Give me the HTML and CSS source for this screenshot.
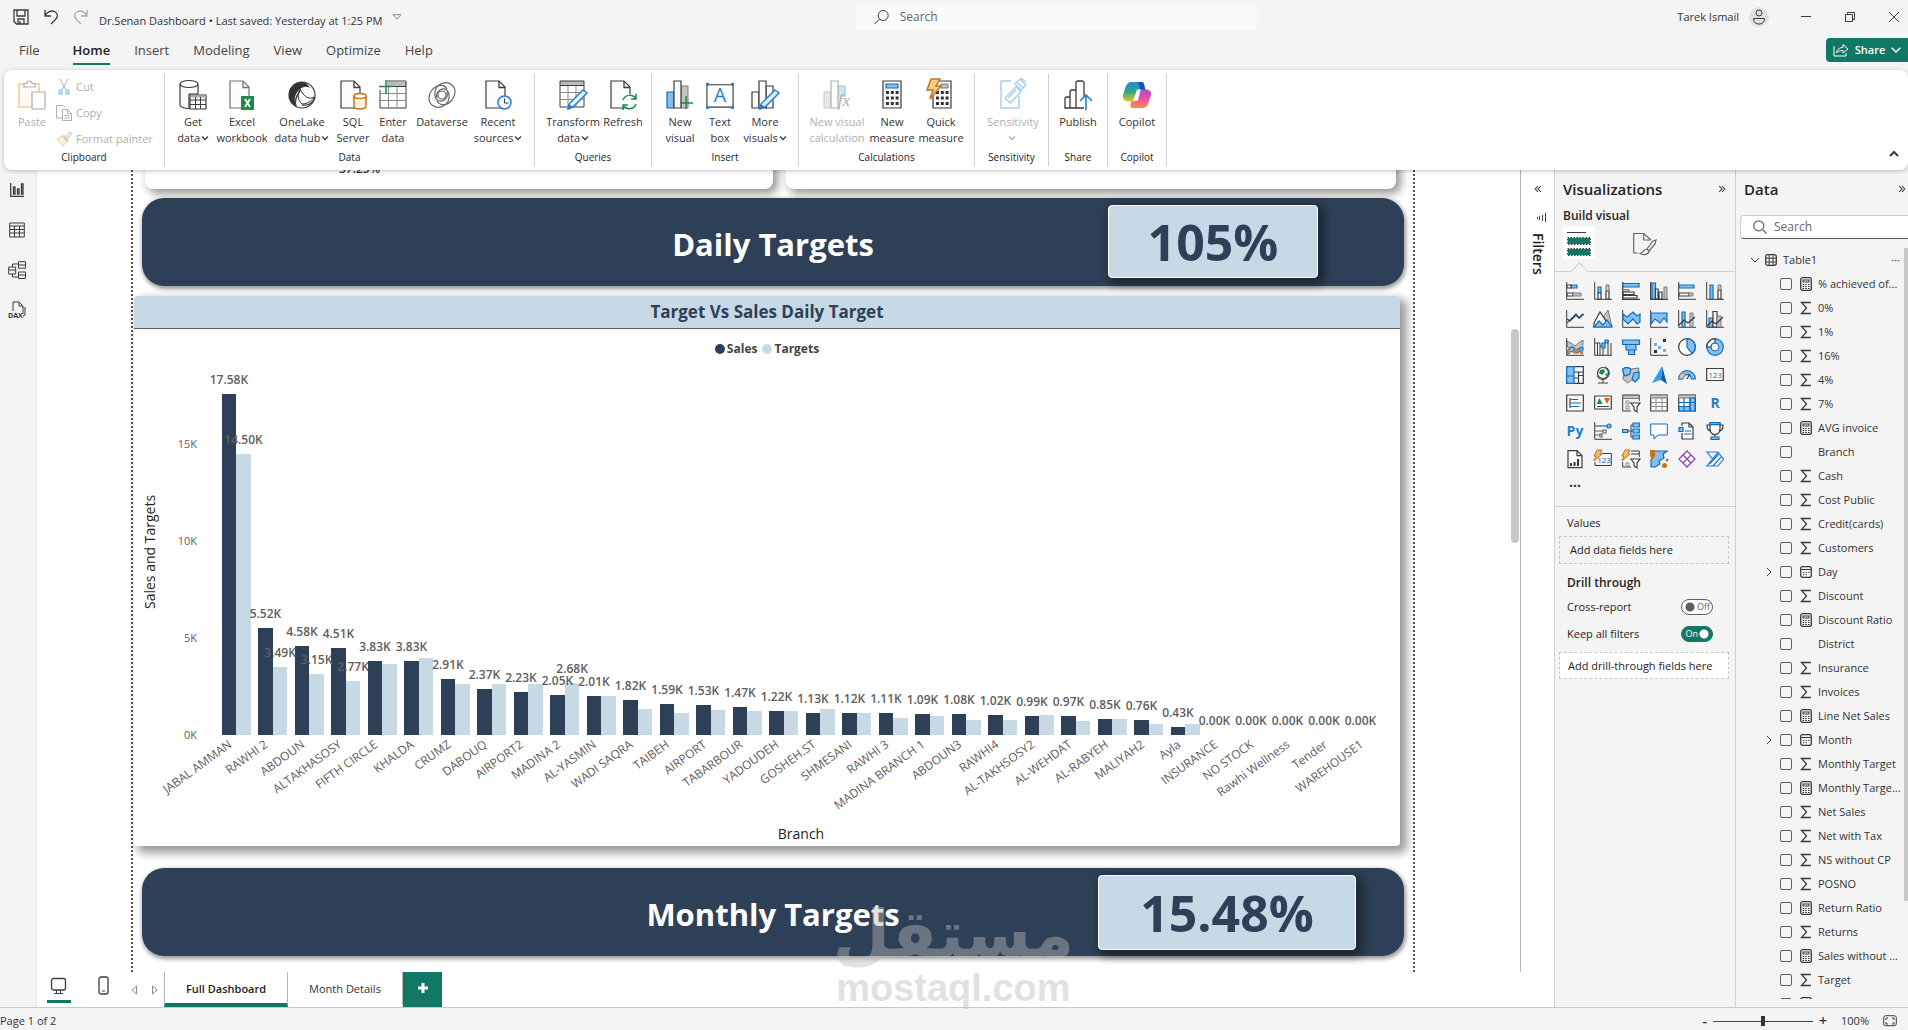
FILE: index.html
```html
<!DOCTYPE html>
<html lang="en">
<head>
    <meta charset="UTF-8">
    <meta name="viewport" content="width=device-width, initial-scale=1.0">
    <title>Dr.Senan Dashboard</title>
    <link rel="stylesheet" href="styles.css">
</head>
<body>

<!-- shared icons -->
<svg class="symbols" aria-hidden="true">
    <symbol id="i-sum" viewBox="0 0 12 14"><path d="M11 1.500H1.500L6.500 7L1.500 12.500H11" class="k w2"/></symbol>
    <symbol id="i-calc" viewBox="0 0 12 14"><rect x=".7" y=".7" width="10.600" height="12.600" rx="2" class="k w2"/><rect x="3" y="3" width="6" height="2" class="k"/><path d="M2.600 7.500h7M2.600 9.500h7M2.600 11.500h7" class="k" stroke-dasharray="1.500 1.200"/></symbol>
    <symbol id="i-date" viewBox="0 0 12 14"><rect x=".7" y="1.700" width="10.600" height="10.600" rx="2" class="k w2"/><path d="M.7 4.500h10.600" class="k"/><path d="M3 7.500h6.500M3 9.700h4" class="k" stroke-dasharray="1.300 1.300"/></symbol>
    <symbol id="i-down" viewBox="0 0 8 8"><path d="M1 2.500L4 5.500L7 2.500" class="k w2"/></symbol>
    <symbol id="i-right" viewBox="0 0 8 10"><path d="M2 1L6 5L2 9" class="k"/></symbol>
    <symbol id="i-dbl" viewBox="0 0 10 10"><path d="M1.500 1.500L5 5L1.500 8.500M5 1.500L8.500 5L5 8.500" class="k w2"/></symbol>
    <symbol id="i-file" viewBox="0 0 28 30"><path d="M2 1h13l6 6v21H2z" class="p"/><path d="M15 1v6.500h6" class="k w2"/></symbol>
</svg>

<header class="titlebar">
    <button class="plain" aria-label="Save"><svg width="16" height="16" viewBox="0 0 16 16"><path d="M1 1h14v14H3.500L1 12.500zM4 1v6h8V1M5 15v-5h6v5M7 12v3" class="k w2"/></svg></button>
    <button class="plain" aria-label="Undo"><svg width="16" height="16" viewBox="0 0 16 16"><path d="M2 1v6h6M2 7C4 3 8 1 11.500 2.500C15.500 4.500 15 8 12.500 10.500L8 15" class="k w2"/></svg></button>
    <button class="plain faded" aria-label="Redo"><svg width="16" height="16" viewBox="0 0 16 16"><path d="M14 1v6H8M14 7C12 3 8 1 4.500 2.500C.5 4.500 1 8 3.500 10.500L8 15" class="k w2"/></svg></button>
    <span class="file-name">Dr.Senan Dashboard • Last saved: Yesterday at 1:25 PM</span>
    <button class="plain" aria-label="File menu"><svg width="10" height="6" viewBox="0 0 10 6"><path d="M1 .7h8L5 5z" class="g"/></svg></button>
    <label class="top-search">
        <svg width="16" height="16" viewBox="0 0 16 16"><circle cx="9.500" cy="6.500" r="5" class="k"/><path d="M6 10L1 15" class="k"/></svg>
        <input type="search" placeholder="Search" aria-label="Search">
    </label>
    <span class="user">Tarek Ismail</span>
    <svg class="avatar" width="20" height="20" viewBox="0 0 20 20"><circle cx="10" cy="10" r="10" fill="#e1e1e1"/><circle cx="10" cy="6" r="3" class="k"/><path d="M4.500 11.500h11c0 4-2.500 5.500-5.500 5.500s-5.500-1.500-5.500-5.500z" class="k"/></svg>
    <button class="plain win" aria-label="Minimize"><svg width="10" height="10" viewBox="0 0 10 10"><path d="M0 4.500h10" class="k"/></svg></button>
    <button class="plain win" aria-label="Restore"><svg width="10" height="10" viewBox="0 0 10 10"><path d="M.5 2.500h7v7h-7zM2.500 2.500v-2h7v7h-2" class="k"/></svg></button>
    <button class="plain win" aria-label="Close"><svg width="10" height="10" viewBox="0 0 10 10"><path d="M0 0l10 10M10 0L0 10" class="k"/></svg></button>
</header>

<nav class="menu">
    <a href="#">File</a>
    <a href="#" class="active">Home</a>
    <a href="#">Insert</a>
    <a href="#">Modeling</a>
    <a href="#">View</a>
    <a href="#">Optimize</a>
    <a href="#">Help</a>
    <button class="share">
        <svg width="16" height="14" viewBox="0 0 16 14"><path d="M1 3v10h12v-3M3.500 10C4 6 7 4.500 10 4.500V1.500L15 6l-5 4V7.500C7 7.500 5 8 3.500 10z" fill="none" stroke="#fff"/></svg>
        Share
        <svg width="10" height="6" viewBox="0 0 10 6"><path d="M.7.7L5 5L9.300.7" fill="none" stroke="#fff" stroke-width="1.400"/></svg>
    </button>
</nav>

<section class="ribbon">
    <div class="group clipboard">
        <div class="tools">
            <button class="tool faded"><svg viewBox="0 0 28 30"><path d="M1 4h20v23H1z" fill="#fff7e6" stroke="#e8a33d" stroke-width="2"/><path d="M6 7V3.500h3a2.500 2.500 0 0 1 5 0h3V7z" class="p"/><path d="M14 12h13v17H14z" class="p"/></svg>Paste</button>
            <div class="small-tools">
                <button class="faded"><svg width="14" height="16" viewBox="0 0 14 16"><path d="M3 0l6 11M11 0L5 11" class="k"/><rect x="2" y="11" width="3" height="4" class="b"/><rect x="9" y="11" width="3" height="4" class="b"/></svg>Cut</button>
                <button class="faded"><svg width="16" height="16" viewBox="0 0 16 16"><path d="M6 13H.5V.5H7l2 2M6.500 4.500h5l4 4v7h-9zM11.500 4.500v4h4M8.500 10.500h5M8.500 13h5" class="k"/></svg>Copy</button>
                <button class="faded"><svg width="16" height="16" viewBox="0 0 16 16"><path d="M8 4L1 8l6 7 5-6z" fill="#fbd9a5" stroke="#d48a2b"/><path d="M6.500 5l5 5.500M9 7l5-6 1.500 1.500L11 8.500" class="k"/></svg>Format painter</button>
            </div>
        </div>
        <div class="group-name">Clipboard</div>
    </div>
    <div class="group data">
        <div class="tools">
            <button class="tool"><svg viewBox="0 0 28 30"><path d="M1 4v21c0 2 4 3.500 9 3.500V14h9V4" class="p"/><ellipse cx="10" cy="4" rx="9" ry="3.500" class="p"/><path d="M11 15h16v14H11z" class="p"/><path d="M11 16.500h16" stroke="#aaa" stroke-width="2"/><path d="M11 20h16M11 24.500h16M16.500 17v12M21.500 17v12" class="k"/></svg>Get<br>data <svg class="chev"><use href="#i-down"/></svg></button>
            <button class="tool"><svg viewBox="0 0 28 30"><g opacity=".7"><use href="#i-file"/></g><path d="M13 16h13v14H13z" fill="#1f8a4c"/><path d="M17 19l5 8M22 19l-5 8" stroke="#fff" stroke-width="1.800"/></svg>Excel<br>workbook</button>
            <button class="tool"><svg viewBox="0 0 28 30"><circle cx="14" cy="15" r="13" class="p"/><path d="M14 2C6 2 1 8 1 15c0 5 3 9 7 11C5 18 8 13 11 10c4-4 8-4 11-2c-2-4-5-6-8-6z" fill="#333"/><path d="M12 9c-3 6-2 12 2 15c6 0 11-4 12-7c-5 3-10 0-14-8z" fill="#fff" class="o"/><path d="M8 26C6 20 9 15 12 11M14 25c6 1 10-1 13-7" class="k w2"/></svg>OneLake<br>data hub <svg class="chev"><use href="#i-down"/></svg></button>
            <button class="tool"><svg viewBox="0 0 28 30"><use href="#i-file"/><path d="M15 16v10c0 4 12 4 12 0V16" fill="#fff4e3" stroke="#c4731b" stroke-width="1.500"/><ellipse cx="21" cy="16" rx="6" ry="2.500" fill="#fff" stroke="#c4731b" stroke-width="1.500"/></svg>SQL<br>Server</button>
            <button class="tool"><svg viewBox="0 0 28 30"><path d="M1 1h26v28H1z" fill="#fff"/><path d="M8 2h19v4H8z" fill="#bbb"/><path d="M8 1h19v27H1V10M8 6.500h19" class="k"/><path d="M1 13.500h26M1 20.500h26M9.500 7v21M18 7v21" class="g"/><path d="M7 0v14M0 6.500h14" stroke="#1f8a4c" stroke-width="1.500"/></svg>Enter<br>data</button>
            <button class="tool"><svg viewBox="0 0 28 30"><g fill="none" stroke="#666" stroke-width="1.200"><path d="M24 5C18 0 8 4 7 12c-1 7 4 11 9 8c3-2 4-5 3-8"/><path d="M4 25C10 30 20 26 21 18c1-7-4-11-9-8c-3 2-4 5-3 8"/><path d="M24 5c4 3 4 10 0 15c-6 7-13 5-15 1M4 25c-4-3-4-10 0-15C10 3 17 5 19 9"/><circle cx="14" cy="15" r="4"/></g></svg>Dataverse</button>
            <button class="tool"><svg viewBox="0 0 28 30"><use href="#i-file"/><circle cx="20.500" cy="22.500" r="6.500" fill="#eff7fe" stroke="#2a80c8" stroke-width="1.500"/><path d="M20.500 18.500v4.500h4" class="k"/></svg>Recent<br>sources <svg class="chev"><use href="#i-down"/></svg></button>
        </div>
        <div class="group-name">Data</div>
    </div>
    <div class="group queries">
        <div class="tools">
            <button class="tool"><svg viewBox="0 0 28 30"><path d="M1 1h24v4H1z" fill="#bbb"/><path d="M1 1h24v26H1zM1 5.500h24" class="k"/><path d="M1 12.500h24M1 19.500h24M9 6v21M17 6v21" class="g"/><path d="M24 10l4 3-14 14-5 2 1-5z" fill="#e3f1fd" stroke="#2a80c8" stroke-width="1.500"/><path d="M10 24l4 3-5 2z" fill="#2a80c8"/></svg>Transform<br>data <svg class="chev"><use href="#i-down"/></svg></button>
            <button class="tool"><svg viewBox="0 0 28 30"><use href="#i-file"/><circle cx="20.500" cy="22" r="8" fill="#fff"/><path d="M14 20c2-6 10-6 13-1M27 14v5h-5M27 24c-2 6-10 6-13 1M14 30v-5h5" fill="none" stroke="#1f8a4c" stroke-width="1.500"/></svg>Refresh</button>
        </div>
        <div class="group-name">Queries</div>
    </div>
    <div class="group insert">
        <div class="tools">
            <button class="tool"><svg viewBox="0 0 28 30"><path d="M1 12h7v16H1z" class="b"/><path d="M15 6h7v22h-7z" class="gf"/><path d="M8 1h7v27H8z" class="p"/><path d="M20 16v13M14 23h13" stroke="#1f8a4c" stroke-width="1.500"/></svg>New<br>visual</button>
            <button class="tool"><svg viewBox="0 0 30 30"><path d="M1 4h28v24H1z" class="p"/><path d="M0 2h3v3H0zM27 2h3v3h-3zM0 27h3v3H0zM27 27h3v3h-3z" fill="#2a80c8"/><text x="15" y="23" class="big-a">A</text></svg>Text<br>box</button>
            <button class="tool"><svg viewBox="0 0 28 30"><path d="M1 12h7v16H1zM15 6h7v22h-7z" class="p"/><path d="M8 1h7v27H8z" class="p"/><path d="M24 10l4 3-14 14-5 2 1-5z" fill="#e3f1fd" stroke="#2a80c8" stroke-width="1.500"/><path d="M10 24l4 3-5 2z" fill="#2a80c8"/></svg>More<br>visuals <svg class="chev"><use href="#i-down"/></svg></button>
        </div>
        <div class="group-name">Insert</div>
    </div>
    <div class="group calculations">
        <div class="tools">
            <button class="tool faded"><svg viewBox="0 0 28 30"><path d="M1 12h7v16H1z" class="gf"/><path d="M15 6h7v10h-7z" class="b"/><path d="M8 1h7v27H8z" class="p"/><text x="21" y="26" class="fx">fx</text></svg>New visual<br>calculation</button>
            <button class="tool"><svg viewBox="0 0 28 30"><path d="M5 1h18v27H5z" class="p"/><path d="M8 4h12v4H8z" class="b"/><path d="M8 12.500h13M8 18h13M8 23.500h13" stroke="#333" stroke-width="3" stroke-dasharray="3 1.800"/></svg>New<br>measure</button>
            <button class="tool"><svg viewBox="0 0 28 30"><path d="M6 1h18v27H6z" class="p"/><path d="M14 4h7v4h-7z" class="gf"/><path d="M9 12.500h13M9 18h13M9 23.500h13" stroke="#333" stroke-width="3" stroke-dasharray="3 1.800"/><path d="M4-1h9L9 6h5L3 19l3-9H0z" fill="#f9c98b" stroke="#c4731b" stroke-width="1.500"/></svg>Quick<br>measure</button>
        </div>
        <div class="group-name">Calculations</div>
    </div>
    <div class="group sensitivity">
        <div class="tools">
            <button class="tool faded"><svg viewBox="0 0 28 30"><g fill="none" stroke="#2a8fd0" stroke-width="1.500"><path d="M12 1H2v27h18V16"/><path d="M6 18L17 7l5 5-11 11z"/><path d="M9 18l8-8M16 4l5-5 6 6-5 5zM18 2l6 6M22-2l5 4"/></g></svg>Sensitivity<br><svg class="chev"><use href="#i-down"/></svg></button>
        </div>
        <div class="group-name">Sensitivity</div>
    </div>
    <div class="group share-group">
        <div class="tools">
            <button class="tool"><svg viewBox="0 0 28 30"><path d="M20 17V3a2 2 0 0 0-2-2h-4a2 2 0 0 0-2 2v25M12 10H8a2 2 0 0 0-2 2v16M6 17H3a2 2 0 0 0-2 2v9h19" class="k w2"/><path d="M22 30V16M16 21l6-6 6 6" fill="none" stroke="#2a80c8" stroke-width="1.600"/></svg>Publish</button>
        </div>
        <div class="group-name">Share</div>
    </div>
    <div class="group share-group">
        <div class="tools">
            <button class="tool"><svg viewBox="0 0 30 30">
                <defs>
                    <linearGradient id="cpA" x1="0" y1="0" x2="0" y2="1"><stop offset="0" stop-color="#1f8fe0"/><stop offset=".5" stop-color="#2fa58a"/><stop offset="1" stop-color="#e8c81e"/></linearGradient>
                    <linearGradient id="cpB" x1="0" y1="0" x2="0" y2="1"><stop offset="0" stop-color="#a94fd0"/><stop offset=".5" stop-color="#ec4f9a"/><stop offset="1" stop-color="#f98f45"/></linearGradient>
                </defs>
                <path d="M15 1h4c3 0 3 2 4 5l1 4c-5 0-7 1-8 4l-3 8H6c-4 0-7-3-6-7l3-9c1-3 3-5 6-5z" fill="url(#cpA)"/>
                <path d="M15 29h-4c-3 0-3-2-3-4l1-3h3c2 0 3-1 4-4l2-7c1-2 2-2 4-2h2c4 0 7 2 6 6l-3 9c-1 3-3 5-6 5z" fill="url(#cpB)"/>
                <path d="M17 1h3c2 0 3 2 3 5l1 3h-5c-2-1-1-6-4-8z" fill="#1757b8"/>
                <path d="M15 9h4l-3 12h-5z" fill="#fff"/>
            </svg>Copilot</button>
        </div>
        <div class="group-name">Copilot</div>
    </div>
    <button class="plain collapse" aria-label="Collapse ribbon"><svg width="10" height="8" viewBox="0 0 10 8"><path d="M1 6l4-4 4 4" class="k w3"/></svg></button>
</section>

<div class="workspace">
    <nav class="rail">
        <button class="plain" aria-label="Report view"><svg width="14" height="14" viewBox="0 0 14 14"><path d="M.7 0v13.300H14M3.500 4v7h1.500V4zM7.500 6v5H9V6zM11.500 1v10H13V1z" class="k w2"/></svg></button>
        <button class="plain" aria-label="Table view"><svg width="16" height="16" viewBox="0 0 16 16"><path d="M.7 1h14.600v14H.7zM.7 4h14.600M.7 7.500h14.600M.7 11h14.600M5.500 4v11M10.500 4v11" class="k"/></svg></button>
        <button class="plain" aria-label="Model view"><svg width="18" height="18" viewBox="0 0 18 18"><path d="M.7 6h7v7h-7zM.7 9h7M10.500.7h7v6.500h-7zM10.500 4h7M10.500 11h7v6.500h-7zM10.500 14h7M4.500 6V3h6M4.500 13v3h6" class="k"/></svg></button>
        <button class="plain" aria-label="DAX query view"><svg width="18" height="18" viewBox="0 0 18 18"><path d="M5 10V1h6l4 4v8M11 1v4h4M17 6v8l-2 1" class="k"/><text x="0" y="17" class="dax">DAX</text></svg></button>
    </nav>

    <main class="report">
        <div class="canvas">
            <div class="page">
                <div class="cards">
                    <div class="card first">37.25%</div>
                    <div class="card"></div>
                </div>
                <div class="banner">
                    <h2>Daily Targets</h2>
                    <div class="kpi daily">105%</div>
                </div>
                <section class="chart">
                    <h3>Target Vs Sales Daily Target</h3>
                    <div class="legend">
                        <span><i class="dot sales"></i>Sales</span>
                        <span><i class="dot targets"></i>Targets</span>
                    </div>
                    <div class="plot-row">
                        <div class="y-title">Sales and Targets</div>
                        <div class="y-axis" id="yAxis"></div>
                        <div class="plot" id="plot"></div>
                    </div>
                    <div class="x-title">Branch</div>
                </section>
                <div class="banner">
                    <h2>Monthly Targets</h2>
                    <div class="kpi monthly">15.48%</div>
                </div>
            </div>
            <div class="scroll"><div class="thumb"></div></div>
        </div>
        <div class="tabs">
            <button class="plain device on" aria-label="Desktop layout"><svg width="18" height="18" viewBox="0 0 18 18"><rect x="1.500" y="1.500" width="14" height="11.500" rx="2" class="k w2"/><path d="M6.500 13v3M10.500 13v3M4 16.500h9" class="k"/></svg></button>
            <button class="plain device" aria-label="Mobile layout"><svg width="12" height="20" viewBox="0 0 12 20"><rect x="1" y="1" width="9" height="17" rx="2" class="k w2"/><path d="M4 15h3" class="k"/></svg></button>
            <button class="plain arrow" aria-label="Previous page"><svg width="6" height="10" viewBox="0 0 6 10"><path d="M5.500 1v8L1 5z" class="g"/></svg></button>
            <button class="plain arrow" aria-label="Next page"><svg width="6" height="10" viewBox="0 0 6 10"><path d="M.5 1v8L5 5z" class="g"/></svg></button>
            <button class="tab active">Full Dashboard</button>
            <button class="tab">Month Details</button>
            <button class="add" aria-label="New page"><svg width="12" height="12" viewBox="0 0 12 12"><path d="M6 1v10M1 6h10" stroke="#fff" stroke-width="3"/></svg></button>
        </div>
        <div class="watermark"><span class="ar" lang="ar">مستقل</span><span>mostaql.com</span></div>
    </main>

    <aside class="filters">
        <button class="plain flip" aria-label="Expand filters"><svg width="8" height="8"><use href="#i-dbl"/></svg></button>
        <svg class="bars" width="9" height="9" viewBox="0 0 9 9"><path d="M.5 4v2M2.500 3v4M5.500 2v6M8.500 0v9" class="k"/></svg>
        <span>Filters</span>
    </aside>

    <aside class="visuals">
        <header><h4>Visualizations</h4><button class="plain" aria-label="Collapse visualizations"><svg width="8" height="8"><use href="#i-dbl"/></svg></button></header>
        <h5>Build visual</h5>
        <div class="modes">
            <button class="plain mode on" aria-label="Build visual"><svg width="24" height="26" viewBox="0 0 24 26"><path d="M0 2.500h19" class="k"/><path d="M1 8h22v6H1zM1 19h22v6H1z" fill="#117865"/><path d="M.5 7.500h23v7H.5zM.5 18.500h23v7H.5z" class="k" stroke-dasharray="1.500 1.500"/></svg></button>
            <button class="plain mode" aria-label="Format visual"><svg width="24" height="26" viewBox="0 0 24 26"><path d="M.7 21V3.500h10L18 10M10.700 3.500v6.500h7M.7 21v2h4" class="g2"/><path d="M23 10l-3 1-6 8 2 2 6-7zM14 19c-4 0-3 4-7 4.500c3 2 9 1 9-2.500z" class="g2"/></svg></button>
        </div>
        <div class="gallery">
            <button aria-label="Stacked bar chart"><svg viewBox="0 0 18 18"><path d="M.7 0v17.300H18" class="k"/><path d="M5 3h6v3H5z" class="b"/><path d="M1 3h4v3H1zM1 11h6v3H1z" class="p"/><path d="M7 11h8v3H7z" class="gf"/></svg></button>
            <button aria-label="Stacked column chart"><svg viewBox="0 0 18 18"><path d="M.7 0v17.300H18" class="k"/><path d="M4 5h3v6H4z" class="b"/><path d="M4 11h3v6H4zM12 9h3v8h-3z" class="p"/><path d="M12 3h3v6h-3z" class="gf"/></svg></button>
            <button aria-label="Clustered bar chart"><svg viewBox="0 0 18 18"><path d="M.7 0v17.300H18" class="k w2"/><path d="M1 1.500h16v3.500H1z" class="b"/><path d="M1 7.500h6v2.500H1z" class="gf"/><path d="M1 10h11v2.500H1z" class="p"/><path d="M1 13.500h14v2.500H1z" class="p"/></svg></button>
            <button aria-label="Clustered column chart"><svg viewBox="0 0 18 18"><path d="M.7 0v17.300H18" class="k w2"/><path d="M2 1h3.500v16H2z" class="b"/><path d="M5.500 7h2.500v10H5.500zM9 10h3v7H9z" class="p"/><path d="M14 5h3v12h-3z" class="gf"/></svg></button>
            <button aria-label="100% stacked bar chart"><svg viewBox="0 0 18 18"><path d="M.7 0v17.300H18" class="k"/><path d="M1 3h15v3H1z" class="b"/><path d="M1 11h10v3H1z" class="p"/><path d="M11 11h4v3h-4z" class="gf"/></svg></button>
            <button aria-label="100% stacked column chart"><svg viewBox="0 0 18 18"><path d="M.7 0v17.300H18" class="k"/><path d="M4 3h3v14H4z" class="b"/><path d="M12 8h3v9h-3z" class="p"/><path d="M12 3h3v5h-3z" class="gf"/></svg></button>

            <button aria-label="Line chart"><svg viewBox="0 0 18 18"><path d="M.7 0v17.300H18" class="k"/><path d="M1 13l9-9 3 4 5-4" class="l"/><path d="M1 9l3 2 6-6 3 3 4-4" class="k w2"/></svg></button>
            <button aria-label="Area chart"><svg viewBox="0 0 18 18"><path d="M10 6l4-6 4 17h-6z" class="gf"/><path d="M0 13L6 2l6 9v6H0z" class="p"/><path d="M0 17l5-6 4 4 4-5 5 7z" class="b"/></svg></button>
            <button aria-label="Stacked area chart"><svg viewBox="0 0 18 18"><path d="M.7 0v17.300H18" class="k"/><path d="M1 4l4 3 6-5 4 4 3-2v8l-3 2-4-5-5 5-5-5z" class="b"/></svg></button>
            <button aria-label="100% stacked area chart"><svg viewBox="0 0 18 18"><path d="M.7 0v17.300H18" class="k"/><path d="M1 3h16v9l-3-4-4 5-5-4-4 5z" class="b"/></svg></button>
            <button aria-label="Line and stacked column"><svg viewBox="0 0 18 18"><path d="M.7 0v17.300H18" class="k"/><path d="M4 2h3v15H4z" class="b"/><path d="M12 3h3v14h-3z" class="gf"/><path d="M1 15l5-5 4 3 7-6" class="k w2"/></svg></button>
            <button aria-label="Line and clustered column"><svg viewBox="0 0 18 18"><path d="M.7 0v17.300H18" class="k"/><path d="M3 8h4v9H3z" class="b"/><path d="M7 1.500h4V17H7z" class="p"/><path d="M11 6h4v11h-4z" class="gf"/><path d="M1 16l5-5 4 3 7-7" class="k w2"/></svg></button>

            <button aria-label="Ribbon chart"><svg viewBox="0 0 18 18"><path d="M1 3l4 2 4 3 5-4 3-2v5l-4 3-5 3-4-2-3-3z" class="gf"/><path d="M2 13c4-8 6-2 8-1s5-3 7-3v3c-3 0-4 3-7 3s-4-4-8 1z" class="b"/><path d="M1 12h3v4H1zM7 11h4v4H7zM14 13h3v3h-3z" fill="#d9772b"/><path d="M.7 0v17.300H18" class="k"/></svg></button>
            <button aria-label="Waterfall chart"><svg viewBox="0 0 18 18"><path d="M.7 0v17.300H18M1 5h5v12M3.500 5v12M6 8h3v9M14 2v15M17 5v12" class="k"/><path d="M8 5h3v5H8zM11 2h3v3h-3z" class="b"/></svg></button>
            <button aria-label="Funnel chart"><svg viewBox="0 0 18 18"><path d="M.5 2h17v4.500H.5zM4 6.500h10V12H4zM6.500 12h6v4.500h-6z" class="b"/></svg></button>
            <button aria-label="Scatter chart"><svg viewBox="0 0 18 18"><path d="M.7 0v17.300H18" class="k"/><path d="M4 5h3v3H4zM8 8h3v3H8zM13 11h3v3h-3z" fill="#6bb3ec"/><path d="M13 1h3v3h-3zM4 12h3v3H4z" fill="#333"/></svg></button>
            <button aria-label="Pie chart"><svg viewBox="0 0 18 18"><circle cx="9" cy="9" r="8.300" class="p"/><path d="M9 .7a8.300 8.300 0 0 1 5 14.800L9 9z" class="b"/></svg></button>
            <button aria-label="Donut chart"><svg viewBox="0 0 18 18"><circle cx="9" cy="9" r="8.300" class="b"/><path d="M9 .7A8.300 8.300 0 0 0 .8 9L5 9a4 4 0 0 1 4-4z" class="p"/><circle cx="9" cy="9" r="4" fill="#f3f3f3" stroke="#0f6cbd"/></svg></button>

            <button aria-label="Treemap"><svg viewBox="0 0 18 18"><path d="M.7.7h16.600v16.600H.7zM8 6h9M12.500 6v11M8 12h4M12.500 9.500H17" class="p"/><path d="M.7.7H8v16.600H.7zM.7 10H8" class="b"/></svg></button>
            <button aria-label="Map"><svg viewBox="0 0 18 18"><circle cx="9" cy="7" r="5.500" class="p"/><path d="M6 4l4-1 1 3-3 3-3-2zM11 8l3-1-1 4z" fill="#1f8a4c"/><path d="M11 .7c5 2 6 9 1 12c-4 2-8 0-9-3M9 14v3M4 17h10" class="k"/></svg></button>
            <button aria-label="Filled map"><svg viewBox="0 0 18 18"><path d="M.7 3c3-2 5-2 8 0l8-1v10l-3 3-4-1-4 3-5-4 1-4z" class="gf"/><path d="M.7 3c3-2 5-2 8 0L8 8 3 10C1 8 .7 6 .7 3zM12 7l5-1v6l-4 4-3-3z" class="b"/></svg></button>
            <button aria-label="Azure map"><svg viewBox="0 0 18 18"><path d="M12 0l5 18-6-4z" fill="#0f5ea8"/><path d="M12 0L2 17l9-3z" fill="#3a9ae4"/></svg></button>
            <button aria-label="Gauge"><svg viewBox="0 0 18 18"><path d="M.7 13a8.300 8.300 0 0 1 16.600 0h-4a4.300 4.300 0 0 0-8.600 0z" class="b"/><path d="M.7 13a8.300 8.300 0 0 1 4-7l3 3-3 4z" class="gf"/><path d="M9 13l3-5" class="k w2"/></svg></button>
            <button aria-label="Card"><svg viewBox="0 0 18 18"><path d="M.7 2.500h16.600v12H.7z" class="p"/><text x="9" y="12" class="num">123</text></svg></button>

            <button aria-label="Multi-row card"><svg viewBox="0 0 18 18"><path d="M.7 1h16.600v16H.7zM4 4v10" class="p"/><path d="M5 5.500h7M5 9h10M5 12.500h8" class="l w2"/></svg></button>
            <button aria-label="KPI"><svg viewBox="0 0 18 18"><path d="M.7 2h16.600v13H.7zM3 12.500h12" class="p"/><path d="M2.500 10L5.500 4l3 6z" fill="#1f8a4c"/><path d="M10 4h6l-3 6z" fill="#d9622b"/></svg></button>
            <button aria-label="Slicer"><svg viewBox="0 0 18 18"><path d="M9 17H.7V1h16.600v6" class="k"/><path d="M1 1.500h16v3H1z" class="gf"/><path d="M4 7h3v3H4zM4 12h3v3H4z" class="g"/><path d="M9 9h9l-3 4v5l-3-2v-3z" class="p"/></svg></button>
            <button aria-label="Table"><svg viewBox="0 0 18 18"><path d="M.7 1h16.600v16H.7z" class="p"/><path d="M.7 1h16.600v3H.7z" class="gf"/><path d="M.7 8.500h16.600M.7 12.500h16.600M6 4v13M12 4v13" class="g"/></svg></button>
            <button aria-label="Matrix"><svg viewBox="0 0 18 18"><path d="M.7 1h16.600v16H.7z" class="p"/><path d="M.7 1h16.600v3H.7z" class="gf"/><path d="M12 4h5v13h-5zM1 12.500h11V17H1z" class="b"/><path d="M.7 8.500h16.600M6 4v13M12 4v13" class="l"/></svg></button>
            <button aria-label="R visual" class="letter">R</button>

            <button aria-label="Python visual" class="letter">Py</button>
            <button aria-label="Key influencers"><svg viewBox="0 0 18 18"><path d="M.7 0v17.300H18" class="k"/><path d="M1 4h12" class="l"/><circle cx="15" cy="4" r="2" class="b"/><path d="M1 9h8M9 8h3v3H9zM1 13h5M6 12h2v3H6z" class="g2"/></svg></button>
            <button aria-label="Decomposition tree"><svg viewBox="0 0 18 18"><path d="M6 9h6M9 3v12M9 3h3M9 15h3" class="k"/><path d="M.7 7.500h5v3h-5zM11 1h6.300v4H11zM11 7h6.300v4H11zM11 13h6.300v4H11z" class="b"/></svg></button>
            <button aria-label="Q&amp;A"><svg viewBox="0 0 18 18"><path d="M.7 2h16.600v11H8l-4 4v-4H.7z" fill="#fff" stroke="#0f6cbd"/></svg></button>
            <button aria-label="Narrative"><svg viewBox="0 0 18 18"><path d="M4 4V1h7l4 4v12H4v-6M11 1v4h4" class="p"/><path d="M1 5.500h4v4H1z" class="b"/><path d="M7 9h6M6 12h7" class="l"/></svg></button>
            <button aria-label="Goals"><svg viewBox="0 0 18 18"><path d="M4 1.500h10v5c0 4-2 6-5 6s-5-2-5-6zM4 3H1c0 4 1 6 4 6M14 3h3c0 4-1 6-4 6M9 12v3" class="p"/><path d="M5 15h8v2.500H5zM4 .7h10v2H4z" class="b"/></svg></button>

            <button aria-label="Paginated report"><svg viewBox="0 0 18 18"><path d="M2 .7h9l5 5v12H2zM11 .7v5h5" class="p"/><path d="M5 16v-3M8.500 16v-4M12 16V9" stroke="#333" stroke-width="2"/></svg></button>
            <button aria-label="Card (new)"><svg viewBox="0 0 18 18"><path d="M8 3.500h9.300v12H1V12" class="k"/><text x="10" y="13" class="num">123</text><path d="M3 0h5L6 4h2L0 11l2-5H0z" fill="#f9b96b" stroke="#c4731b"/></svg></button>
            <button aria-label="Slicer (new)"><svg viewBox="0 0 18 18"><path d="M9 17H.7v-5M9 1h8.300v6M9 4h8" class="k"/><path d="M4 13h3v3H4z" class="g"/><path d="M9 9h9l-3 4v5l-3-2v-3z" class="p"/><path d="M3 0h5L6 4h2L0 11l2-5H0z" fill="#f9b96b" stroke="#c4731b"/></svg></button>
            <button aria-label="ArcGIS map"><svg viewBox="0 0 18 18"><path d="M4 1h13l-4 3 1 4-5 3 1 3-5 3H1V9" class="b"/><path d="M0 0h5v6L2.500 10L0 6z" fill="#c4731b"/><circle cx="14.500" cy="15.500" r="2.500" fill="#c4731b"/><circle cx="17" cy="10" r="1.500" fill="#c4731b"/></svg></button>
            <button aria-label="Power Apps"><svg viewBox="0 0 18 18"><g fill="#fff" stroke="#8e44ad" stroke-width="1.300"><path d="M9 1l8 8-8 8-8-8z"/><path d="M5 5l8 8M13 5l-8 8"/></g></svg></button>
            <button aria-label="Power Automate"><svg viewBox="0 0 18 18"><path d="M1 2h11l5.500 7-5.500 7H1l5.500-7zM6.500 9L12 2.500M3.500 14L13 4M7 16l8-9" fill="none" stroke="#1f7fd0" stroke-width="1.200"/></svg></button>
        </div>
        <button class="plain more">...</button>
        <div class="wells">
            <p>Values</p>
            <div class="well">Add data fields here</div>
            <h5>Drill through</h5>
            <label class="toggle">Cross-report <input type="checkbox"><span>Off</span></label>
            <label class="toggle">Keep all filters <input type="checkbox" checked><span>On</span></label>
            <div class="well white">Add drill-through fields here</div>
        </div>
    </aside>

    <aside class="fields">
        <header><h4>Data</h4><button class="plain" aria-label="Collapse data"><svg width="8" height="8"><use href="#i-dbl"/></svg></button></header>
        <label class="field-search">
            <svg width="14" height="14" viewBox="0 0 14 14"><circle cx="5.800" cy="5.800" r="5" class="g2"/><path d="M9.500 9.500l4 4" class="g2"/></svg>
            <input type="search" placeholder="Search" aria-label="Search fields">
        </label>
        <div class="field-list">
            <div class="table-row">
                <svg width="8" height="8" viewBox="0 0 8 8"><path d="M0 2l4 4 4-4" class="k"/></svg>
                <svg width="12" height="12" viewBox="0 0 12 12"><rect x=".7" y=".7" width="10.600" height="10.600" rx="2" class="k w2"/><path d="M4.200 1v10M8 1v10M1 4.200h10M1 8h10" class="k"/></svg>
                <span>Table1</span>
                <button class="plain" aria-label="More options">···</button>
            </div>
            <div id="fieldRows"></div>
        </div>
    </aside>
</div>

<footer class="status">
    <span>Page 1 of 2</span>
    <div class="zoom">
        <button class="plain">-</button>
        <input type="range" min="10" max="190" value="100" aria-label="Zoom">
        <button class="plain">+</button>
        <span>100%</span>
        <button class="plain fit" aria-label="Fit to page"><svg width="14" height="12" viewBox="0 0 14 12"><rect x=".7" y=".7" width="12.600" height="10" rx="2" class="k"/><path d="M3 5V3h2M9 3h2v2M11 7v2H9M5 9H3V7" class="k"/></svg></button>
    </div>
</footer>

<script>
// branch, sales, target, show target label (values in thousands)
const branches = [
    ["JABAL AMMAN", 17.58, 14.50, true],
    ["RAWHI 2", 5.52, 3.49, true],
    ["ABDOUN", 4.58, 3.15, true],
    ["ALTAKHASOSY", 4.51, 2.77, true],
    ["FIFTH CIRCLE", 3.83, 3.68],
    ["KHALDA", 3.83, 3.98],
    ["CRUMZ", 2.91, 2.65],
    ["DABOUQ", 2.37, 2.65],
    ["AIRPORT2", 2.23, 2.65],
    ["MADINA 2", 2.05, 2.68, true],
    ["AL-YASMIN", 2.01, 2.03],
    ["WADI SAQRA", 1.82, 1.36],
    ["TAIBEH", 1.59, 1.13],
    ["AIRPORT", 1.53, 1.29],
    ["TABARBOUR", 1.47, 1.22],
    ["YADOUDEH", 1.22, 1.22],
    ["GOSHEH.ST", 1.13, 1.32],
    ["SHMESANI", 1.12, 1.15],
    ["RAWHI 3", 1.11, 0.88],
    ["MADINA BRANCH 1", 1.09, 0.96],
    ["ABDOUN3", 1.08, 0.76],
    ["RAWHI4", 1.02, 0.76],
    ["AL-TAKHSOSY2", 0.99, 1.05],
    ["AL-WEHDAT", 0.97, 0.70],
    ["AL-RABYEH", 0.85, 0.81],
    ["MALIYAH2", 0.76, 0.58],
    ["Ayla", 0.43, 0.57],
    ["INSURANCE", 0, 0],
    ["NO STOCK", 0, 0],
    ["Rawhi Wellness", 0, 0],
    ["Tender", 0, 0],
    ["WAREHOUSE1", 0, 0]
];
const axisMax = 18.56;
const pct = v => (v / axisMax * 100).toFixed(2) + "%";

document.getElementById("plot").innerHTML = branches.map(([name, sales, target, showTarget]) => `
    <div class="slot">
        <div class="bar sales" style="height:${pct(sales)}"><b>${sales.toFixed(2)}K</b></div>
        <div class="bar targets" style="height:${pct(target)}">${showTarget ? `<b>${target.toFixed(2)}K</b>` : ""}</div>
        <span class="branch">${name}</span>
    </div>`).join("");

document.getElementById("yAxis").innerHTML = [0, 5, 10, 15].map(v =>
    `<span style="bottom:${pct(v)}">${v}K</span>`).join("");

// field name, icon, expandable
const fields = [
    ["% achieved of...", "calc"], ["0%", "sum"], ["1%", "sum"], ["16%", "sum"], ["4%", "sum"], ["7%", "sum"],
    ["AVG invoice", "calc"], ["Branch", ""], ["Cash", "sum"], ["Cost Public", "sum"], ["Credit(cards)", "sum"],
    ["Customers", "sum"], ["Day", "date", true], ["Discount", "sum"], ["Discount Ratio", "calc"], ["District", ""],
    ["Insurance", "sum"], ["Invoices", "sum"], ["Line Net Sales", "calc"], ["Month", "date", true],
    ["Monthly Target", "sum"], ["Monthly Targe...", "calc"], ["Net Sales", "sum"], ["Net with Tax", "sum"],
    ["NS without CP", "sum"], ["POSNO", "sum"], ["Return Ratio", "calc"], ["Returns", "sum"],
    ["Sales without ...", "calc"], ["Target", "sum"], ["", "calc"]
];

document.getElementById("fieldRows").innerHTML = fields.map(([name, icon, open]) => `
    <label class="field">
        <svg class="expand">${open ? '<use href="#i-right"/>' : ""}</svg>
        <input type="checkbox">
        <svg class="type">${icon ? `<use href="#i-${icon}"/>` : ""}</svg>
        <span>${name}</span>
    </label>`).join("");
</script>

</body>
</html>
```

FILE: styles.css
```css
* {
    box-sizing: border-box;
}
body {
    margin: 0;
    height: 100vh;
    display: flex;
    flex-direction: column;
    overflow: hidden;
    background: #f4f4f4;
    color: #333;
    font-family: "Open Sans", "Noto Sans", sans-serif;
    font-size: 11px;
    line-height: 16px;
}
h2, h3, h4, h5, p {
    margin: 0;
}
button, input {
    font: inherit;
    color: inherit;
}
button {
    border: 0;
    padding: 0;
    background: none;
    cursor: pointer;
}
svg {
    overflow: visible;
}
input[type="search"] {
    border: 0;
    outline: none;
    background: transparent;
    padding: 0;
    width: 100%;
    font-size: 12px;
}
input::placeholder {
    color: #666;
    opacity: 1;
}
.plain {
    display: flex;
    align-items: center;
    justify-content: center;
}
.faded {
    opacity: 0.4;
}
.symbols {
    position: absolute;
    width: 0;
    height: 0;
}

/* icon strokes */
.k { fill: none; stroke: #3b3b3b; stroke-width: 1; }
.w2 { stroke-width: 1.3; }
.w3 { stroke-width: 2; }
.p { fill: #fbfbfb; stroke: #3b3b3b; stroke-width: 1.2; }
.g { fill: none; stroke: #8a8a8a; stroke-width: 1; }
.g2 { fill: none; stroke: #666; stroke-width: 1.2; }
.gf { fill: #c4c4c4; stroke: #7a7a7a; stroke-width: 1; }
.b { fill: #83c0ee; stroke: #0f6cbd; stroke-width: 1.2; }
.l { fill: none; stroke: #0f6cbd; stroke-width: 1.2; }
.o { stroke: #333; }
.big-a { font-size: 21px; fill: #2a80c8; text-anchor: middle; }
.fx { font: italic 17px "Liberation Serif", serif; fill: #333; text-anchor: middle; }
.dax { font-size: 7px; font-weight: 700; fill: #333; }
.num { font-size: 8px; fill: #0f6cbd; text-anchor: middle; }

/* title bar */
.titlebar {
    height: 34px;
    flex: none;
    display: flex;
    align-items: center;
    padding: 0 9px 0 13px;
    position: relative;
}
.titlebar > .plain {
    margin-right: 14px;
}
.file-name {
    margin: 7px 10px 0 -4px;
}
.top-search {
    position: absolute;
    left: 50%;
    transform: translateX(-50%);
    margin-left: 102px;
    top: 4px;
    width: 21%;
    height: 26px;
    background: #fafafa;
    border-radius: 4px;
    display: flex;
    align-items: center;
    gap: 10px;
    padding-left: 18px;
}
.user {
    margin-left: auto;
    margin-right: 10px;
}
.avatar {
    margin-right: 32px;
}
.titlebar > .win {
    margin-right: 34px;
}
.titlebar > .win:last-child {
    margin-right: 0;
}

/* menu */
.menu {
    height: 36px;
    flex: none;
    display: flex;
    align-items: flex-start;
    padding: 4px 0 0 19px;
    font-size: 13px;
    gap: 24px;
}
.menu a {
    color: #444;
    text-decoration: none;
    line-height: 24px;
    height: 27px;
}
.menu a:first-child {
    margin-right: 9px;
}
.menu a.active {
    color: #222;
    font-weight: 600;
    border-bottom: 2px solid #117865;
}
.share {
    margin-left: auto;
    height: 24px;
    width: 82px;
    border-radius: 4px 0 0 4px;
    background: #117865;
    color: #fff;
    font-size: 11px;
    font-weight: 600;
    display: flex;
    align-items: center;
    justify-content: space-between;
    padding: 0 7px;
}

/* ribbon */
.ribbon {
    height: 100px;
    flex: none;
    margin-left: 4px;
    background: #fff;
    border-radius: 8px;
    box-shadow: 0 1px 4px rgba(0, 0, 0, 0.25);
    display: flex;
    padding: 4px 0;
    position: relative;
    z-index: 2;
}
.group {
    border-right: 1px solid #d0d0d0;
    display: flex;
    flex-direction: column;
    justify-content: space-between;
}
.clipboard { width: 161px; }
.data { width: 370px; }
.queries { width: 117px; }
.insert { width: 147px; }
.calculations { width: 176px; }
.sensitivity { width: 74px; }
.share-group { width: 59px; }
.tools {
    display: grid;
    justify-content: start;
    align-items: start;
    padding: 6px 0 0 8px;
}
.clipboard .tools { grid-template-columns: 40px 112px; }
.data .tools { grid-template-columns: 40px 58px 62px 40px 40px 58px 54px; }
.queries .tools { grid-template-columns: 60px 40px; }
.insert .tools { grid-template-columns: 40px 40px 50px; }
.calculations .tools { grid-template-columns: 60px 50px 48px; }
.sensitivity .tools { grid-template-columns: 60px; }
.share-group .tools { grid-template-columns: 58px; padding-left: 0; }
.tool {
    white-space: nowrap;
}
.tool > svg:first-child {
    display: block;
    width: 28px;
    height: 30px;
    margin: 0 auto 4px;
}
.chev {
    width: 8px;
    height: 8px;
    margin-left: -2px;
}
.group-name {
    text-align: center;
    font-size: 10px;
    line-height: 18px;
    color: #222;
}
.small-tools {
    display: flex;
    flex-direction: column;
    gap: 10px;
    padding-left: 4px;
    margin-top: -1px;
}
.small-tools button {
    display: flex;
    align-items: center;
    gap: 4px;
    white-space: nowrap;
}
.small-tools svg {
    width: 16px;
}
.collapse {
    margin: auto 9px 8px auto;
}

/* workspace */
.workspace {
    flex: 1;
    min-height: 0;
    display: flex;
}
.rail {
    width: 37px;
    flex: none;
    border-right: 1px solid #e8e8e8;
    display: flex;
    flex-direction: column;
    gap: 22px;
    padding: 11px 3px 0 0;
}
.rail .plain {
    height: 18px;
}
.report {
    flex: 1;
    min-width: 0;
    display: flex;
    flex-direction: column;
    background: #fff;
    position: relative;
}
.canvas {
    flex: 1;
    min-height: 0;
    overflow: hidden;
    display: flex;
    padding-left: 94px;
    border-right: 1px solid #b3b3b3;
}
.page {
    flex: 1;
    min-width: 0;
    margin-top: -60px;
    border-left: 2px dotted #555;
    border-right: 2px dotted #555;
}
.scroll {
    width: 105px;
    display: flex;
    justify-content: flex-end;
    padding: 159px 1px 0 0;
}
.thumb {
    width: 8px;
    height: 214px;
    border-radius: 4px;
    background: #c8c8c8;
}
.cards {
    display: grid;
    grid-template-columns: 628fr 610fr;
    gap: 13px;
    padding: 0 17px 0 12px;
}
.card {
    height: 79px;
    background: #fff;
    border-radius: 8px;
    box-shadow: 4px 4px 8px 1px rgba(0, 0, 0, 0.4);
}
.card.first {
    padding: 52px 0 0 194px;
    font-size: 12px;
    font-weight: 600;
    line-height: 14px;
}
.banner {
    height: 88px;
    margin: 9px 9px 10px;
    background: #2e4057;
    border-radius: 22px;
    box-shadow: 1px 2px 4px 1px rgba(0, 0, 0, 0.4);
    position: relative;
}
.banner h2 {
    color: #fff;
    font-size: 31px;
    font-weight: 700;
    line-height: 92px;
    text-align: center;
}
.kpi {
    position: absolute;
    top: 7px;
    display: flex;
    align-items: center;
    justify-content: center;
    background: #c7d9e5;
    border: 1px solid #fff;
    border-radius: 4px;
    box-shadow: 4px 4px 10px 3px rgba(0, 0, 0, 0.4);
    color: #2e4057;
    font-size: 50px;
    font-weight: 700;
}
.daily {
    right: 86px;
    width: 210px;
    height: 73px;
}
.monthly {
    right: 48px;
    width: 258px;
    height: 75px;
}

/* chart */
.chart {
    height: 550px;
    margin: 0 13px 22px 1px;
    background: #fff;
    border-radius: 4px;
    box-shadow: 5px 5px 10px 2px rgba(0, 0, 0, 0.4);
    position: relative;
}
.chart h3 {
    height: 33px;
    line-height: 31px;
    background: #c7d9e5;
    border-bottom: 1px solid #605e5c;
    border-radius: 4px 4px 0 0;
    color: #2e4057;
    font-size: 17px;
    font-weight: 700;
    text-align: center;
}
.legend {
    height: 46px;
    padding-top: 12px;
    display: flex;
    justify-content: center;
    gap: 5px;
    font-size: 12px;
    font-weight: 700;
    color: #444;
}
.legend span {
    display: flex;
    align-items: center;
    height: 16px;
    gap: 2px;
}
.dot {
    width: 10px;
    height: 10px;
    border-radius: 50%;
}
.sales {
    background: #2e4057;
}
.targets {
    background: #c7d9e5;
}
.plot-row {
    display: flex;
    height: 360px;
    padding-right: 14px;
}
.y-title {
    width: 32px;
    writing-mode: vertical-rl;
    transform: rotate(180deg);
    text-align: center;
    padding-top: 7px;
    line-height: 32px;
    font-size: 14px;
    color: #252423;
}
.y-axis {
    width: 52px;
    position: relative;
    color: #605e5c;
}
.y-axis span {
    position: absolute;
    right: 21px;
    margin-bottom: -8px;
}
.plot {
    flex: 1;
    display: grid;
    grid-template-columns: repeat(32, minmax(0, 1fr));
}
.slot {
    position: relative;
    display: flex;
    align-items: flex-end;
    padding: 0 10%;
}
.bar {
    flex: 1;
    min-width: 0;
    display: flex;
    justify-content: center;
}
.bar b {
    height: 0;
    margin-top: -22px;
    font-size: 12px;
    font-weight: 600;
    color: #605e5c;
    position: relative;
    z-index: 1;
}
.branch {
    position: absolute;
    top: 100%;
    right: 50%;
    margin: 0 6px;
    white-space: nowrap;
    transform: rotate(-36deg);
    transform-origin: right center;
    font-size: 12px;
    color: #605e5c;
}
.x-title {
    padding: 91px 0 0 68px;
    text-align: center;
    font-size: 14px;
    color: #252423;
}

/* page tabs */
.tabs {
    height: 35px;
    flex: none;
    display: flex;
    align-items: stretch;
    padding-left: 10px;
}
.device {
    width: 24px;
    margin-right: 21px;
    border-bottom: 3px solid transparent;
    margin-bottom: 4px;
}
.device.on {
    border-bottom-color: #117865;
}
.arrow {
    width: 6px;
    margin-right: 15px;
}
.device + .arrow {
    margin-left: -6px;
}
.arrow + .tab {
    margin-left: -9px;
}
.tab {
    width: 124px;
    border-right: 1px solid #b3b3b3;
    border-bottom: 4px solid transparent;
    font-size: 11px;
    padding-top: 3px;
}
.tab + .tab {
    width: 115px;
}
.tab.active {
    border-left: 1px solid #b3b3b3;
    border-bottom-color: #117865;
    color: #222;
    font-weight: 600;
}
.add {
    width: 39px;
    background: #117865;
}
.watermark {
    position: absolute;
    left: 54%;
    bottom: -4px;
    width: 230px;
    display: flex;
    flex-direction: column;
    align-items: center;
    color: #bcbcbc;
    opacity: 0.43;
    z-index: 3;
    font: 700 38px/46px "Liberation Sans", sans-serif;
}
.watermark .ar {
    font: 700 66px/60px "DejaVu Sans", sans-serif;
}

/* side panes */
.filters {
    width: 33px;
    flex: none;
    background: #fff;
    display: flex;
    flex-direction: column;
    align-items: center;
    padding-top: 15px;
    gap: 20px;
}
.filters span {
    writing-mode: vertical-rl;
    font-size: 14px;
    font-weight: 600;
    color: #222;
    margin-top: -9px;
}
.bars {
    margin-left: 8px;
}
.flip {
    transform: scaleX(-1);
}
.visuals {
    width: 181px;
    flex: none;
    border-left: 1px solid #d0d0d0;
    padding-top: 9px;
}
.visuals header, .fields header {
    display: flex;
    justify-content: space-between;
    align-items: center;
    padding: 0 9px 0 8px;
    height: 20px;
}
h4 {
    font-size: 15px;
    font-weight: 600;
    color: #252423;
}
h5 {
    font-size: 12px;
    font-weight: 600;
    color: #252423;
}
.visuals > h5 {
    padding: 9px 0 0 8px;
}
.modes {
    display: flex;
    gap: 34px;
    height: 48px;
    padding: 3px 0 0 8px;
    border-bottom: 1px solid #d0d0d0;
    position: relative;
}
.modes::after {
    content: "";
    position: absolute;
    left: 18px;
    bottom: -7px;
    width: 12px;
    height: 12px;
    background: #f4f4f4;
    border: solid #d0d0d0;
    border-width: 1px 0 0 1px;
    transform: rotate(45deg);
}
.mode {
    width: 32px;
    height: 32px;
}
.mode.on {
    background: #fff;
}
.gallery {
    display: grid;
    grid-template-columns: repeat(6, 28px);
    grid-auto-rows: 28px;
    padding: 10px 0 0 11px;
}
.gallery button {
    width: 18px;
    height: 18px;
}
.gallery svg {
    width: 18px;
    height: 18px;
    display: block;
}
.gallery .letter {
    color: #1f7fc4;
    font-size: 14px;
    font-weight: 700;
    line-height: 18px;
}
.more {
    margin: -4px 0 0 14px;
    font-size: 14px;
    font-weight: 700;
}
.wells {
    border-top: 1px solid #d0d0d0;
    margin-top: 16px;
    padding: 8px 6px 0 4px;
    color: #252423;
}
.wells p, .wells h5 {
    padding-left: 8px;
}
.wells h5 {
    padding-bottom: 2px;
}
.well {
    border: 1px dashed #c8c8c8;
    height: 28px;
    line-height: 26px;
    padding-left: 10px;
    margin: 5px 0 11px;
}
.well.white {
    background: #fff;
    padding-left: 8px;
    height: 27px;
}
.toggle {
    display: flex;
    align-items: center;
    justify-content: space-between;
    height: 27px;
    padding: 0 16px 0 8px;
    position: relative;
}
.toggle input {
    appearance: none;
    width: 32px;
    height: 16px;
    margin: 0;
    border: 1px solid #605e5c;
    border-radius: 8px;
    background: #fff radial-gradient(circle at 8px 7px, #605e5c 4px, transparent 5px);
}
.toggle input:checked {
    border-color: #117865;
    background: #117865 radial-gradient(circle at 22px 7px, #fff 4px, transparent 5px);
}
.toggle span {
    position: absolute;
    right: 19px;
    font-size: 9px;
    color: #605e5c;
}
.toggle input:checked + span {
    right: 31px;
    color: #fff;
}
.fields {
    width: 173px;
    flex: none;
    border-left: 1px solid #d0d0d0;
    padding: 9px 0 8px;
    display: flex;
    flex-direction: column;
}
.fields header {
    padding-right: 2px;
}
.field-search {
    display: flex;
    align-items: center;
    gap: 7px;
    height: 24px;
    flex: none;
    margin: 16px 0 9px 4px;
    padding-left: 12px;
    background: #fff;
    border: 1px solid #d0d0d0;
    border-right: 0;
    border-bottom-color: #605e5c;
    border-radius: 4px 0 0 4px;
}
.field-list {
    flex: 1;
    min-height: 0;
    overflow: hidden;
    background: linear-gradient(#c8c8c8, #c8c8c8) right top / 4px 87% no-repeat;
}
.table-row, .field {
    display: flex;
    align-items: center;
    height: 24px;
    white-space: nowrap;
}
.table-row {
    padding: 0 8px 0 15px;
    gap: 6px;
}
.table-row .plain {
    margin-left: auto;
}
.field {
    padding-left: 29px;
}
.expand {
    width: 8px;
    height: 10px;
    margin-right: 7px;
}
.field input {
    appearance: none;
    width: 12px;
    height: 12px;
    margin: 0 8px 0 0;
    border: 1px solid #605e5c;
    border-radius: 2px;
}
.type {
    width: 12px;
    height: 14px;
    margin-right: 6px;
}

/* status bar */
.status {
    height: 23px;
    flex: none;
    border-top: 1px solid #c8c8c8;
    display: flex;
    justify-content: space-between;
    align-items: center;
    padding: 4px 11px 0 0;
}
.zoom {
    display: flex;
    align-items: center;
    gap: 6px;
}
.zoom span {
    margin: 0 8px;
}
.zoom .plain {
    font-size: 14px;
    font-weight: 600;
}
.zoom input {
    appearance: none;
    width: 100px;
    height: 10px;
    margin: 0;
    background: linear-gradient(#444, #444) center / 100% 1px no-repeat;
}
.zoom input::-webkit-slider-thumb {
    appearance: none;
    width: 4px;
    height: 10px;
    background: #333;
}
```
